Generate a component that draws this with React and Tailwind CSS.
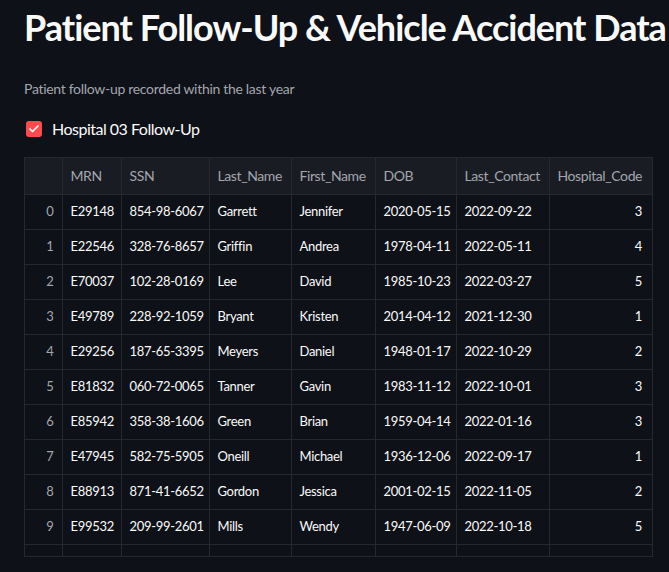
import { Check } from 'lucide-react';

const columns = [
    { key: 'idx', label: '', width: 37 },
    { key: 'mrn', label: 'MRN', width: 59 },
    { key: 'ssn', label: 'SSN', width: 88 },
    { key: 'last', label: 'Last_Name', width: 82 },
    { key: 'first', label: 'First_Name', width: 84 },
    { key: 'dob', label: 'DOB', width: 81 },
    { key: 'contact', label: 'Last_Contact', width: 93 },
    { key: 'code', label: 'Hospital_Code', width: 103 },
];

const rows = [
    ['E29148', '854-98-6067', 'Garrett', 'Jennifer', '2020-05-15', '2022-09-22', 3],
    ['E22546', '328-76-8657', 'Griffin', 'Andrea', '1978-04-11', '2022-05-11', 4],
    ['E70037', '102-28-0169', 'Lee', 'David', '1985-10-23', '2022-03-27', 5],
    ['E49789', '228-92-1059', 'Bryant', 'Kristen', '2014-04-12', '2021-12-30', 1],
    ['E29256', '187-65-3395', 'Meyers', 'Daniel', '1948-01-17', '2022-10-29', 2],
    ['E81832', '060-72-0065', 'Tanner', 'Gavin', '1983-11-12', '2022-10-01', 3],
    ['E85942', '358-38-1606', 'Green', 'Brian', '1959-04-14', '2022-01-16', 3],
    ['E47945', '582-75-5905', 'Oneill', 'Michael', '1936-12-06', '2022-09-17', 1],
    ['E88913', '871-41-6652', 'Gordon', 'Jessica', '2001-02-15', '2022-11-05', 2],
    ['E99532', '209-99-2601', 'Mills', 'Wendy', '1947-06-09', '2022-10-18', 5],
];

export default function App() {
    return (
        <div
            className="min-h-[572px] bg-[#0e1117] pl-6 pt-[6px] text-[#fafafa]"
            style={{ fontFamily: 'Lato, "Open Sans", sans-serif' }}
        >
            <h1 className="whitespace-nowrap text-[36px] font-bold leading-[43px] tracking-[-1px]">
                Patient Follow-Up &amp; Vehicle Accident Data
            </h1>

            <p className="mt-[30px] text-[14px] leading-5 tracking-[-0.3px] text-[#a3a6ad]">
                Patient follow-up recorded within the last year
            </p>

            {/* checkbox */}
            <label className="mt-[18px] flex h-6 items-center">
                <span className="ml-[2px] flex h-4 w-4 items-center justify-center rounded-[3px] bg-[#ff4b4b]">
                    <Check className="h-3 w-3 text-white" strokeWidth={3.5} />
                </span>
                <span className="ml-[10px] text-[16px] leading-6 tracking-[-0.5px]">Hospital 03 Follow-Up</span>
            </label>

            {/* dataframe, scrolled so the next row is cut off */}
            <div className="mt-4 h-[400px] w-[629px] overflow-hidden border border-[#26282e]">
                <table className="w-[627px] table-fixed border-collapse text-[13px] tracking-[-0.3px]">
                    <colgroup>
                        {columns.map((c) => (
                            <col key={c.key} style={{ width: c.width }} />
                        ))}
                    </colgroup>
                    <thead>
                        <tr className="h-[36px] bg-[#1a1c24]">
                            {columns.map((c) => (
                                <th
                                    key={c.key}
                                    className="overflow-hidden whitespace-nowrap border-b border-l border-[#26282e] px-2 text-left text-[14px] font-normal tracking-[-0.4px] text-[#a3a6ad] first:border-l-0"
                                >
                                    {c.label}
                                </th>
                            ))}
                        </tr>
                    </thead>
                    <tbody>
                        {rows.map((r, i) => (
                            <tr key={i} className="h-[35px]">
                                <td className="border-b border-[#26282e] pr-2 text-right text-[#a3a6ad]">{i}</td>
                                {r.map((v, j) => (
                                    <td
                                        key={j}
                                        className={
                                            'overflow-hidden whitespace-nowrap border-b border-l border-[#26282e] ' +
                                            (j === 6 ? 'pr-[10px] text-right' : 'px-2 text-left')
                                        }
                                    >
                                        {v}
                                    </td>
                                ))}
                            </tr>
                        ))}
                        <tr className="h-[35px]">
                            {columns.map((c, j) => (
                                <td
                                    key={c.key}
                                    className={'border-b border-[#26282e] ' + (j === 0 ? '' : 'border-l')}
                                />
                            ))}
                        </tr>
                    </tbody>
                </table>
            </div>
        </div>
    );
}
